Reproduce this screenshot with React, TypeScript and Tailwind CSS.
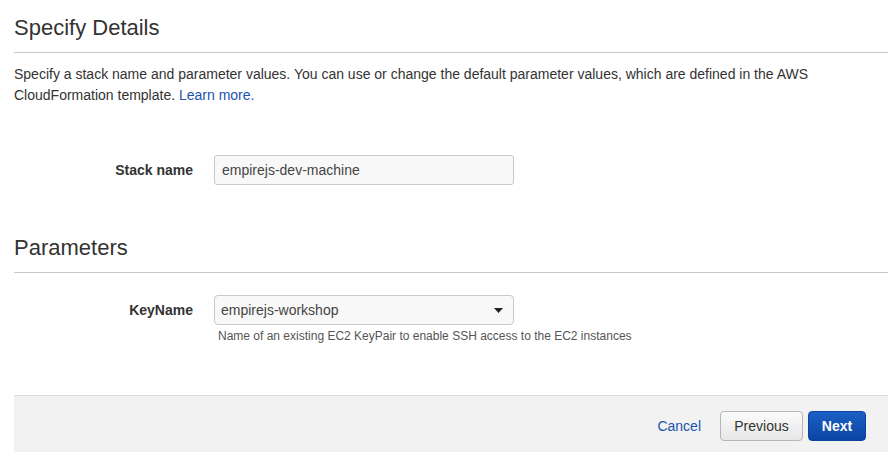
import React from "react";

export default function App() {
  return (
    <div
      className="w-[888px] h-[452px] bg-white text-[#333] overflow-hidden flex flex-col"
      style={{ fontFamily: '"Liberation Sans", Arial, sans-serif' }}
    >
      <div className="pl-[14px] flex flex-col">
        <h2 className="mt-[15px] text-[22px] leading-[26px] pb-[11px] border-b border-[#c8c8c8] text-[#333]">
          Specify Details
        </h2>
        <p className="mt-[11px] text-[14px] leading-[21px] text-[#333] pr-[60px]">
          Specify a stack name and parameter values. You can use or change the default parameter values, which are defined in the AWS CloudFormation template. <span className="text-[#1a52b0]">Learn more.</span>
        </p>
        <div className="mt-[49px] flex items-center">
          <div className="w-[179px] text-right text-[14px] font-bold text-[#333]">Stack name</div>
          <div className="ml-[21px] w-[300px] h-[30px] rounded-[3px] border border-[#c9c9c9] bg-[#f8f8f8] flex items-center px-[7px] text-[14px] text-[#444]">
            empirejs-dev-machine
          </div>
        </div>
        <h2 className="mt-[50px] text-[22px] leading-[26px] pb-[11px] border-b border-[#c8c8c8] text-[#333]">
          Parameters
        </h2>
        <div className="mt-[22px] flex items-center">
          <div className="w-[179px] text-right text-[14px] font-bold text-[#333]">KeyName</div>
          <div className="ml-[21px] w-[300px] h-[30px] rounded-[4px] border border-[#c9c9c9] bg-[#f8f8f8] flex items-center justify-between pl-[6px] pr-[10px] text-[14px] text-[#444]">
            <span>empirejs-workshop</span>
            <svg width="9" height="5" viewBox="0 0 9 5">
              <path d="M0 0 L9 0 L4.5 5 Z" fill="#222" />
            </svg>
          </div>
        </div>
        <div className="ml-[204px] mt-[3px] text-[12px] leading-[16px] text-[#555]">
          Name of an existing EC2 KeyPair to enable SSH access to the EC2 instances
        </div>
      </div>
      <div className="ml-[14px] mt-auto h-[57px] bg-[#f2f2f2] border-t border-[#dcdcdc] flex items-start justify-end pt-[15px] pr-[22px]">
        <div className="flex items-center">
          <span className="text-[14px] text-[#1a52b0] mr-[19px]">Cancel</span>
          <button className="w-[83px] h-[30px] rounded-[4px] border border-[#b5b5b5] bg-gradient-to-b from-[#fbfbfb] to-[#e6e6e6] text-[14px] text-[#333]">
            Previous
          </button>
          <button className="ml-[5px] w-[58px] h-[30px] rounded-[4px] border border-[#0c45a0] bg-gradient-to-b from-[#1b5fc4] to-[#0a45a3] text-[14px] font-bold text-white">
            Next
          </button>
        </div>
      </div>
    </div>
  );
}
